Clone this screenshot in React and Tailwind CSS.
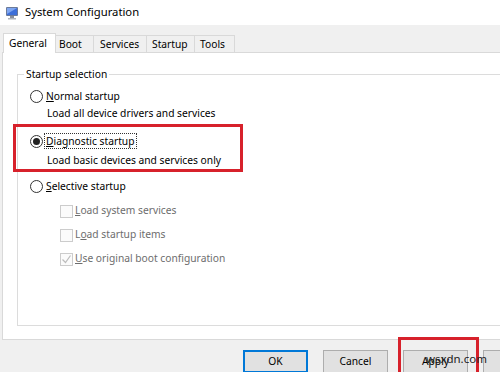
import React from "react";

const font = { fontFamily: '"Segoe UI", "Noto Sans", "Open Sans", sans-serif' };

function AppIcon() {
  return (
    <svg width="14" height="14" viewBox="0 0 14 14">
      <rect x="1" y="1" width="12" height="9" rx="1" fill="#6b7a99" />
      <rect x="2" y="2" width="10" height="7" fill="#3d6fd9" />
      <path d="M2 2h10L2 8z" fill="#7fa6f0" />
      <rect x="5" y="10" width="4" height="2" fill="#8a8f99" />
      <rect x="3" y="12" width="8" height="1.5" fill="#b0b4bb" />
    </svg>
  );
}

function Radio({ checked, label, accel, focused }) {
  const rest = label.slice(1);
  return (
    <div className="flex items-center h-[16px]">
      <span className="w-[13px] h-[13px] rounded-full border border-[#333] bg-white flex items-center justify-center shrink-0">
        {checked && <span className="w-[7px] h-[7px] rounded-full bg-[#222]" />}
      </span>
      <span
        className={
          "ml-[2px] px-[1px] text-black leading-[14px] " +
          (focused ? "outline outline-1 outline-dotted outline-[#333]" : "")
        }
      >
        <span className="underline">{accel}</span>
        {rest}
      </span>
    </div>
  );
}

function Check({ checked, children }) {
  return (
    <div className="flex items-center h-[16px]">
      <span className="w-[13px] h-[13px] border border-[#cccccc] bg-[#fbfbfb] flex items-center justify-center shrink-0">
        {checked && (
          <svg width="11" height="11" viewBox="0 0 11 11">
            <path d="M1.5 5.5l3 3 5-7" fill="none" stroke="#bcbcbc" strokeWidth="1.2" />
          </svg>
        )}
      </span>
      <span className="ml-[2px] text-[#6d6d6d]">{children}</span>
    </div>
  );
}

function Button({ label, isDefault }) {
  return (
    <div
      className={
        "w-[65px] h-[23px] shrink-0 bg-[#e1e1e1] flex items-center justify-center text-black " +
        (isDefault ? "border-2 border-[#0078d7]" : "border border-[#adadad]")
      }
    >
      {label}
    </div>
  );
}

export default function App() {
  return (
    <div
      className="relative w-[500px] h-[372px] overflow-hidden bg-[#f0f0f0] text-[10.25px] text-black"
      style={font}
    >
      {/* title bar */}
      <div className="h-[25px] bg-white flex items-center pl-[5px]">
        <AppIcon />
        <span className="ml-[6px] text-[11.25px] text-black leading-none pb-[2px]">System Configuration</span>
      </div>

      {/* tabs */}
      <div className="pt-[8px] pl-[3px] flex items-end">
        <div className="relative z-10 w-[53px] h-[20px] pl-[5px] pt-[2px] bg-white border border-b-0 border-[#d9d9d9] mb-[-1px] -mr-[2px] leading-[14px]">
          General
        </div>
        <div className="flex items-end">
          <div className="w-[40px] h-[17px] pl-[4px] pt-[1px] border border-b-0 border-[#d9d9d9] leading-[14px]">Boot</div>
          <div className="w-[53px] h-[17px] pl-[6px] pt-[1px] border border-b-0 border-l-0 border-[#d9d9d9] leading-[14px]">Services</div>
          <div className="w-[48px] h-[17px] pl-[5px] pt-[1px] border border-b-0 border-l-0 border-[#d9d9d9] leading-[14px]">Startup</div>
          <div className="w-[40px] h-[17px] pl-[5px] pt-[1px] border border-b-0 border-l-0 border-[#d9d9d9] leading-[14px]">Tools</div>
        </div>
      </div>

      {/* tab panel */}
      <div className="ml-[2px] w-[520px] h-[288px] bg-white border border-[#d9d9d9] pt-[21px] pl-[14px]">
        <div className="relative w-[520px] h-[252px] border border-[#dcdcdc] pl-[12px] pt-[13px]">
          <span className="absolute -top-[8px] left-[6px] bg-white px-[2px] leading-[14px]">Startup selection</span>

          <Radio label="Normal startup" accel="N" />
          <div className="pl-[17px] mt-[1px] h-[16px] leading-[16px]">Load all device drivers and services</div>

          <div className="mt-[12px]">
            <Radio label="Diagnostic startup" accel="D" checked focused />
          </div>
          <div className="pl-[17px] mt-[3px] h-[16px] leading-[16px]">Load basic devices and services only</div>

          <div className="mt-[10px]">
            <Radio label="Selective startup" accel="S" />
          </div>

          <div className="pl-[30px] mt-[9px] flex flex-col gap-[8px]">
            <Check>
              <span className="underline">L</span>oad system services
            </Check>
            <Check>
              L<span className="underline">o</span>ad startup items
            </Check>
            <Check checked>
              <span className="underline">U</span>se original boot configuration
            </Check>
          </div>
        </div>
      </div>

      {/* buttons */}
      <div className="flex gap-[15px] pl-[243px] mt-[10px]">
        <Button label="OK" isDefault />
        <Button label="Cancel" />
        <Button label="Apply" />
        <Button label="" />
      </div>

      {/* annotation boxes */}
      <div className="absolute left-[13px] top-[124px] w-[230px] h-[48px] border-[3px] border-[#d7212b]" />
      <div className="absolute left-[398px] top-[337px] w-[81px] h-[40px] border-[3px] border-[#d7212b]" />
      <span className="absolute left-[426px] top-[353px] text-[11.5px] text-[#222] leading-none">wsxdn.com</span>
    </div>
  );
}
